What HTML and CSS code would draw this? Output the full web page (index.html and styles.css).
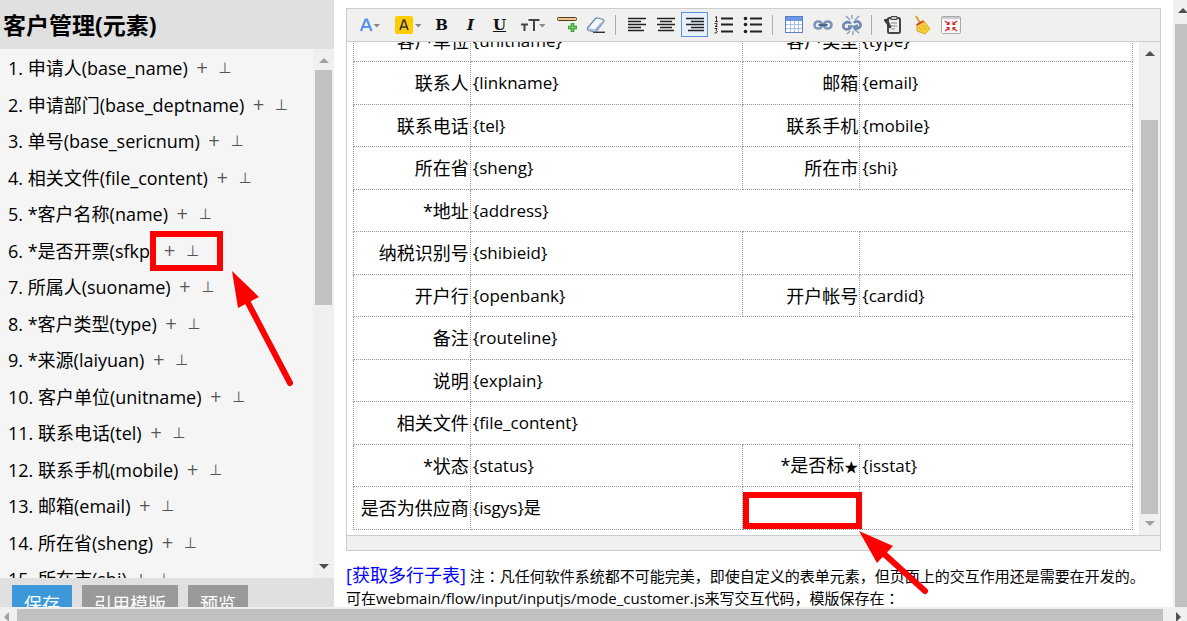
FILE: index.html
```html
<!DOCTYPE html>
<html lang="zh-CN">
<head>
<meta charset="utf-8">
<title>客户管理</title>
<link rel="stylesheet" href="styles.css">
</head>
<body>
<div class="workspace">
  <aside class="sidebar">
    <h1 class="sidebar-title">客户管理(元素)</h1>
    <div class="sidebar-body">
      <div class="fields">
        <div class="field">1. 申请人(base_name)<button class="op">+</button><button class="op">⊥</button></div>
        <div class="field">2. 申请部门(base_deptname)<button class="op">+</button><button class="op">⊥</button></div>
        <div class="field">3. 单号(base_sericnum)<button class="op">+</button><button class="op">⊥</button></div>
        <div class="field">4. 相关文件(file_content)<button class="op">+</button><button class="op">⊥</button></div>
        <div class="field">5. *客户名称(name)<button class="op">+</button><button class="op">⊥</button></div>
        <div class="field">6. *是否开票(sfkp)<button class="op">+</button><button class="op">⊥</button></div>
        <div class="field">7. 所属人(suoname)<button class="op">+</button><button class="op">⊥</button></div>
        <div class="field">8. *客户类型(type)<button class="op">+</button><button class="op">⊥</button></div>
        <div class="field">9. *来源(laiyuan)<button class="op">+</button><button class="op">⊥</button></div>
        <div class="field">10. 客户单位(unitname)<button class="op">+</button><button class="op">⊥</button></div>
        <div class="field">11. 联系电话(tel)<button class="op">+</button><button class="op">⊥</button></div>
        <div class="field">12. 联系手机(mobile)<button class="op">+</button><button class="op">⊥</button></div>
        <div class="field">13. 邮箱(email)<button class="op">+</button><button class="op">⊥</button></div>
        <div class="field">14. 所在省(sheng)<button class="op">+</button><button class="op">⊥</button></div>
        <div class="field">15. 所在市(shi)<button class="op">+</button><button class="op">⊥</button></div>
      </div>
      <div class="vbar at-top"><i class="arrow up"></i><i class="thumb"></i><i class="arrow down"></i></div>
    </div>
    <div class="actions">
      <button class="btn primary">保存</button>
      <button class="btn">引用模版</button>
      <button class="btn">预览</button>
    </div>
  </aside>

  <main class="main">
    <section class="editor">
      <div class="toolbar">
        <button class="tool wide" aria-label="字体颜色"><svg width="22" height="20" viewBox="0 0 22 20"><path d="M2 16L6.500 4.500h1.500L12.500 16M4 12h7" fill="none" stroke="#5a92ec" stroke-width="2.200"/><path d="M14.500 9h6.500l-3.200 3.500z" fill="#888"/></svg></button>
        <button class="tool wide" aria-label="背景颜色"><svg width="27" height="20" viewBox="0 0 27 20"><rect x="0" y="1" width="18" height="18" rx="2" fill="#fc0"/><path d="M5 15L8.500 5h1L13 15M6.500 12h5" fill="none" stroke="#333" stroke-width="1.600"/><path d="M20 9h6.500l-3.200 3.500z" fill="#888"/></svg></button>
        <button class="tool letter" aria-label="粗体"><b>B</b></button>
        <button class="tool letter" aria-label="斜体"><i>I</i></button>
        <button class="tool letter" aria-label="下划线"><u>U</u></button>
        <button class="tool wide" aria-label="字号"><svg width="26" height="20" viewBox="0 0 26 20"><path d="M1 9.500h7M4.500 9.500V16M8.500 5h11M14 5v11" fill="none" stroke="#444" stroke-width="2"/><path d="M19 9h6.500l-3.200 3.500z" fill="#888"/></svg></button>
        <button class="tool" aria-label="分隔线"><svg width="20" height="20" viewBox="0 0 20 20"><rect x=".5" y="2.500" width="19" height="3" rx="1" fill="#e8c98c" stroke="#5a3a1c"/><path d="M15.500 8v9M11 12.500h9" stroke="#3fa535" stroke-width="3.600"/><path d="M15.500 9v7M12 12.500h7" stroke="#7fd070" stroke-width="1"/></svg></button>
        <button class="tool" aria-label="清除格式"><svg width="20" height="20" viewBox="0 0 20 20"><path d="M7 17.300h12" stroke="#333" stroke-width="1.400"/><path d="M1.500 13L9.500 3.500q1-1 2.500-.5l5 1.500q1.500 1 .5 2.500L10.500 16q-1 1-2.500.7L2.500 15.500q-1.500-1-1-2.500z" fill="#f4f8fd" stroke="#6682ad" stroke-width="1.200"/><path d="M2 13l6.500 1.500L17.500 5v2l-7.500 9-7-1.500z" fill="#9fb6d8"/></svg></button>
        <span class="sep"></span>
        <button class="tool" aria-label="左对齐"><svg width="18" height="16" viewBox="0 0 18 16"><path d="M0 1.500h18M0 4.500h13M0 7.500h18M0 10.500h13M0 13.500h16" stroke="#222" stroke-width="1.700"/></svg></button>
        <button class="tool" aria-label="居中"><svg width="18" height="16" viewBox="0 0 18 16"><path d="M0 1.500h18M3 4.500h12M0 7.500h18M3 10.500h12M1 13.500h16" stroke="#222" stroke-width="1.700"/></svg></button>
        <button class="tool active" aria-label="右对齐"><svg width="18" height="16" viewBox="0 0 18 16"><path d="M0 1.500h18M5 4.500h13M0 7.500h18M5 10.500h13M2 13.500h16" stroke="#222" stroke-width="1.700"/></svg></button>
        <button class="tool" aria-label="有序列表"><svg width="20" height="18" viewBox="0 0 20 18"><path d="M7 2.500h12M7 8.500h12M7 15.500h12" stroke="#222" stroke-width="1.800"/><path d="M1 1.500l1.500-1V5M1 5.500h3M.5 7.500H3V9L1 10.500h2.500M.5 12.500H3l-1 2 1.500 1L2 17H.5" fill="none" stroke="#333"/></svg></button>
        <button class="tool" aria-label="无序列表"><svg width="20" height="18" viewBox="0 0 20 18"><path d="M7 2.500h12M7 8.500h12M7 15.500h12" stroke="#222" stroke-width="1.800"/><g fill="#222"><circle cx="2.500" cy="2.500" r="1.800"/><circle cx="2.500" cy="8.500" r="1.800"/><circle cx="2.500" cy="15.500" r="1.800"/></g></svg></button>
        <span class="sep"></span>
        <button class="tool" aria-label="表格"><svg width="18" height="17" viewBox="0 0 18 17"><rect x=".5" y=".5" width="17" height="16" fill="#fff" stroke="#5a80c4"/><path d="M1 1h16v4H1z" fill="#6a98e6"/><path d="M5.500 5v11M9.500 5v11M13.500 5v11M1 8.500h16M1 12.500h16" stroke="#a9c2ea"/></svg></button>
        <button class="tool" aria-label="链接"><svg width="20" height="12" viewBox="0 0 20 12"><g fill="none" stroke="#7b95ba" stroke-width="2.600"><rect x="1.500" y="2.500" width="7.500" height="7" rx="3.500"/><rect x="11" y="2.500" width="7.500" height="7" rx="3.500"/></g><path d="M5.500 6h9" stroke="#4a658f" stroke-width="2.200"/></svg></button>
        <button class="tool" aria-label="取消链接"><svg width="20" height="20" viewBox="0 0 20 20"><g fill="none" stroke="#7089b0" stroke-width="2.600"><path d="M9 8.500Q6 6 3 8t-1 5q2 2.500 6 .5l1-2H6M12 8q1-2 4-1.500 3 1.500 2.500 4.500-1.500 3-5.500 3l-1-2 4-1.500"/></g><path d="M4 1l4 4M10 0v4M17 1l-4 4M5 19l3-3M11 20v-4M17 18l-4-3" stroke="#8398b8" stroke-width="1.300"/></svg></button>
        <span class="sep"></span>
        <button class="tool" aria-label="粘贴"><svg width="18" height="20" viewBox="0 0 18 20"><rect x="4" y="3" width="12" height="15" rx="1.500" fill="#eee" stroke="#444" stroke-width="2"/><path d="M7 1.500h6v3H7z" fill="#ccc" stroke="#444"/><path d="M7 8h6M7 11h6M7 14h4" stroke="#888"/><path d="M0 5l3-1 4 8-1 1z" fill="#444" stroke="#333"/></svg></button>
        <button class="tool" aria-label="清理"><svg width="18" height="20" viewBox="0 0 18 20"><path d="M3 1l4 7" stroke="#e0a838" stroke-width="2.200"/><path d="M4 10l7-4 6 8-5 5-8-3z" fill="#f6cf38" stroke="#dba92c"/><path d="M6 12l3 4M9 10l4 5" stroke="#dba92c"/><path d="M3.500 10l7-4" stroke="#d83a28" stroke-width="2"/></svg></button>
        <button class="tool" aria-label="全屏"><svg width="20" height="18" viewBox="0 0 20 18"><rect x=".5" y=".5" width="19" height="17" rx="1" fill="#fafafa" stroke="#aaa"/><path d="M1 2h18" stroke="#ccc" stroke-width="2"/><path d="M4 5l4 3M16 5l-4 3M4 15l4-3M16 15l-4-3" stroke="#d83434" stroke-width="1.500"/><path d="M8.500 5v4H5zM11.500 5v4H15zM8.500 15v-4H5zM11.500 15v-4H15z" fill="#d02828"/></svg></button>
      </div>
      <div class="editor-body">
        <div class="canvas">
          <table class="form">
            <colgroup><col class="c-label"><col class="c-value"><col class="c-label"><col class="c-value"></colgroup>
            <tr><th>客户单位</th><td>{unitname}</td><th>客户类型</th><td>{type}</td></tr>
            <tr><th>联系人</th><td>{linkname}</td><th>邮箱</th><td>{email}</td></tr>
            <tr><th>联系电话</th><td>{tel}</td><th>联系手机</th><td>{mobile}</td></tr>
            <tr><th>所在省</th><td>{sheng}</td><th>所在市</th><td>{shi}</td></tr>
            <tr><th>*地址</th><td colspan="3">{address}</td></tr>
            <tr><th>纳税识别号</th><td>{shibieid}</td><th></th><td></td></tr>
            <tr><th>开户行</th><td>{openbank}</td><th>开户帐号</th><td>{cardid}</td></tr>
            <tr><th>备注</th><td colspan="3">{routeline}</td></tr>
            <tr><th>说明</th><td colspan="3">{explain}</td></tr>
            <tr><th>相关文件</th><td colspan="3">{file_content}</td></tr>
            <tr><th>*状态</th><td>{status}</td><th>*是否标<span class="star">★</span></th><td>{isstat}</td></tr>
            <tr><th>是否为供应商</th><td>{isgys}是</td><th></th><td></td></tr>
          </table>
        </div>
        <div class="vbar at-end"><i class="arrow up"></i><i class="thumb"></i><i class="arrow down"></i></div>
      </div>
      <div class="statusbar"></div>
    </section>
    <p class="note"><a class="link" href="#">[获取多行子表]</a> 注<span class="colon" lang="zh-TW">：</span>凡任何软件系统都不可能完美，即使自定义的表单元素，但页面上的交互作用还是需要在开发的。<br>可在webmain/flow/input/inputjs/mode_customer.js来写交互代码，模版保存在<span class="colon" lang="zh-TW">：</span></p>
  </main>
  <div class="page-vbar"><i class="arrow up"></i><i class="thumb"></i></div>
</div>
<div class="page-hbar"><i class="arrow left"></i><i class="thumb"></i><i class="arrow right"></i></div>

<svg class="marks" aria-hidden="true">
  <g fill="none" stroke="#f00" stroke-width="6">
    <rect x="153" y="234" width="67" height="34"/>
    <rect x="746" y="495" width="113" height="31"/>
    <path d="M246 299L290 383M882 552L925 591" stroke-linecap="round"/>
  </g>
  <path d="M232 271L259 297L238 308ZM859 531L893 546L877 563Z" fill="#f00"/>
</svg>
</body>
</html>
```
FILE: styles.css
```css
* { box-sizing: border-box; }

body {
  margin: 0;
  height: 100vh;
  display: flex;
  flex-direction: column;
  position: relative;
  overflow: hidden;
  background: #fff;
  color: #000;
  font: 17px/24px "Open Sans", "Noto Sans CJK SC", sans-serif;
}

button {
  border: 0;
  padding: 0;
  background: none;
  font-family: inherit;
}

.workspace { flex: 1; min-height: 0; display: flex; }

/* left panel */
.sidebar {
  width: 334px;
  flex: none;
  display: flex;
  flex-direction: column;
  overflow: hidden;
  background: #f5f5f5;
}
.sidebar-title {
  flex: none;
  margin: 0;
  padding: 9px 3px 8px;
  background: #e0e0e0;
  font-size: 23px;
  line-height: 32px;
}
.sidebar-body { flex: 1; min-height: 0; display: flex; }
.fields { flex: 1; overflow: hidden; padding-left: 8px; }
.field {
  display: flex;
  align-items: center;
  height: 36px;
  padding-top: 2px;
  font-size: 18px;
  white-space: nowrap;
}
.field:nth-child(even) { height: 37px; }
.op {
  margin-left: 8px;
  color: #555;
  font: 15px/20px "DejaVu Sans", sans-serif;
}
.op + .op { margin-left: 10px; }
.actions {
  flex: none;
  height: 29px;
  padding: 7px 12px 0;
  display: flex;
  align-items: flex-start;
  gap: 10px;
  overflow: hidden;
  background: #e0e0e0;
}
.btn {
  flex: none;
  height: 35px;
  padding: 0 12px;
  background: #999;
  color: #fff;
  font-size: 18px;
}
.primary { background: #3b99d9; }

/* scroll bars */
.arrow { flex: none; width: 0; height: 0; border: 5px solid transparent; }
.up { border-top: 0; border-bottom-color: #505050; }
.down { border-bottom: 0; border-top-color: #505050; }
.left { border-left: 0; border-right-color: #a0a0a0; }
.right { border-right: 0; border-left-color: #505050; }
.thumb { background: #c1c1c1; }
.vbar {
  flex: none;
  width: 21px;
  padding: 9px 2px;
  display: flex;
  flex-direction: column;
  align-items: center;
  background: #f0f0f0;
}
.vbar .thumb { width: 17px; }
.at-top .up { border-bottom-color: #a0a0a0; }
.at-top .thumb { height: 235px; margin: 7px 0 auto; }
.at-end .thumb { flex: 1; margin: 64px 0 7px; }
.at-end .down { border-top-color: #a0a0a0; }
.page-vbar {
  flex: none;
  width: 14px;
  padding: 8px 0 0 2px;
  display: flex;
  flex-direction: column;
  background: #f0f0f0;
}
.page-vbar .up { margin-left: 3px; }
.page-vbar .thumb { flex: 1; margin-top: 11px; }
.page-hbar {
  flex: none;
  height: 14px;
  padding: 2px 6px 0 4px;
  display: flex;
  background: #f0f0f0;
}
.page-hbar .arrow { margin-top: 3px; }
.page-hbar .thumb { flex: 1; margin: 0 13px 0 8px; }

/* editor */
.main { flex: 1; min-width: 0; padding: 8px 12px 0; overflow: hidden; }
.editor { border: 1px solid #ccc; }
.toolbar {
  display: flex;
  align-items: center;
  gap: 2px;
  padding: 3px 5px 4px;
  background: #f0f0ee;
  border-bottom: 1px solid #ccc;
}
.tool {
  flex: none;
  width: 27px;
  height: 25px;
  display: flex;
  align-items: center;
  justify-content: center;
}
.wide { width: 36px; }
.active { border: 1px solid #5b93d8; background: #e8f0fa; }
.letter { font: bold 15px/18px "DejaVu Serif", serif; color: #111; }
.sep { width: 1px; height: 20px; margin: 0 5px 0 4px; background: #aaa; }
.editor-body { height: 493px; display: flex; }
.canvas {
  flex: 1;
  min-width: 0;
  padding: 0 6px 5px;
  display: flex;
  flex-direction: column;
  justify-content: flex-end;
  overflow: hidden;
}
.form { width: 100%; table-layout: fixed; border-collapse: collapse; }
.c-label { width: 15%; }
.c-value { width: 35%; }
.form tr { height: 42px; }
.form tr:nth-child(even) { height: 43px; }
.form th, .form td { border: 1px dotted #999; padding: 0 1px; white-space: nowrap; }
.form th { text-align: right; font-weight: normal; font-size: 18px; }
.form td { text-align: left; padding-left: 2px; }
.star { font-size: 14px; }
.statusbar { height: 15px; border-top: 1px solid #ccc; background: #f0f0ee; }

.note { margin: 14px 0 0; font-size: 15px; line-height: 21px; white-space: nowrap; }
.link { color: #00f; font-size: 18px; text-decoration: none; }
.colon { font-family: "Noto Sans CJK TC", sans-serif; }

.marks {
  position: absolute;
  inset: 0;
  width: 100%;
  height: 100%;
  pointer-events: none;
}
```
